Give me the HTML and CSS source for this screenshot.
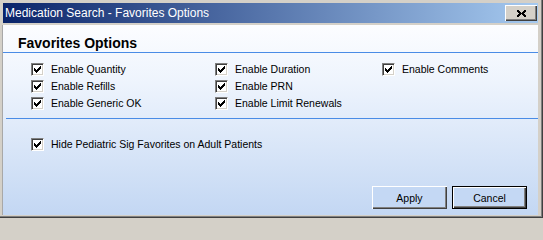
FILE: index.html
```html
<!DOCTYPE html>
<html>
<head>
<meta charset="utf-8">
<title>Medication Search - Favorites Options</title>
<link rel="stylesheet" href="styles.css">
</head>
<body>
<svg class="defs" width="0" height="0" aria-hidden="true">
  <defs>
    <symbol id="chk" viewBox="0 0 7 7">
      <rect x="6" y="0" width="1" height="1"/>
      <rect x="5" y="1" width="2" height="1"/>
      <rect x="0" y="2" width="1" height="1"/>
      <rect x="4" y="2" width="3" height="1"/>
      <rect x="0" y="3" width="2" height="1"/>
      <rect x="3" y="3" width="3" height="1"/>
      <rect x="0" y="4" width="5" height="1"/>
      <rect x="1" y="5" width="3" height="1"/>
      <rect x="2" y="6" width="1" height="1"/>
    </symbol>
  </defs>
</svg>
<div class="window">
  <div class="titlebar">
    <span class="title">Medication Search - Favorites Options</span>
    <button class="close" aria-label="Close">
      <svg width="9" height="7" viewBox="0 0 9 7">
        <rect x="0" y="0" width="2" height="1"/><rect x="7" y="0" width="2" height="1"/>
        <rect x="0" y="1" width="3" height="1"/><rect x="6" y="1" width="3" height="1"/>
        <rect x="1" y="2" width="3" height="1"/><rect x="5" y="2" width="3" height="1"/>
        <rect x="2" y="3" width="5" height="1"/>
        <rect x="1" y="4" width="3" height="1"/><rect x="5" y="4" width="3" height="1"/>
        <rect x="0" y="5" width="3" height="1"/><rect x="6" y="5" width="3" height="1"/>
        <rect x="0" y="6" width="2" height="1"/><rect x="7" y="6" width="2" height="1"/>
      </svg>
    </button>
  </div>
  <div class="panel">
    <div class="heading">Favorites Options</div>
    <div class="options">
      <label class="opt"><span class="cb"><svg><use href="#chk"/></svg></span>Enable Quantity</label>
      <label class="opt"><span class="cb"><svg><use href="#chk"/></svg></span>Enable Refills</label>
      <label class="opt"><span class="cb"><svg><use href="#chk"/></svg></span>Enable Generic OK</label>
      <label class="opt"><span class="cb"><svg><use href="#chk"/></svg></span>Enable Duration</label>
      <label class="opt"><span class="cb"><svg><use href="#chk"/></svg></span>Enable PRN</label>
      <label class="opt"><span class="cb"><svg><use href="#chk"/></svg></span>Enable Limit Renewals</label>
      <label class="opt"><span class="cb"><svg><use href="#chk"/></svg></span>Enable Comments</label>
    </div>
    <div class="sep"></div>
    <div class="extra">
      <label class="opt"><span class="cb"><svg><use href="#chk"/></svg></span>Hide Pediatric Sig Favorites on Adult Patients</label>
    </div>
    <div class="actions">
      <button class="btn">Apply</button>
      <button class="btn default">Cancel</button>
    </div>
  </div>
</div>
</body>
</html>
```

FILE: styles.css
```css
html, body {
  margin: 0;
  padding: 0;
  background: #d4d0c8;
}

.defs {
  position: absolute;
  width: 0;
  height: 0;
}

.window {
  width: 543px;
  height: 218px;
  box-sizing: border-box;
  padding: 3px 5px 3px 3px;
  background: #d4d0c8;
  box-shadow: inset -1px -1px 0 #404040, inset -2px -2px 0 #808080;
  display: flex;
  flex-direction: column;
  font-family: "Liberation Sans", Arial, sans-serif;
}

.titlebar {
  height: 20px;
  flex: none;
  display: flex;
  align-items: center;
  justify-content: space-between;
  background: linear-gradient(to right, #0a246a, #a6caf0);
  padding-left: 2px;
  padding-right: 1px;
}

.title {
  color: #ffffff;
  font-size: 12px;
  line-height: 20px;
  white-space: nowrap;
}

.close {
  width: 32px;
  height: 16px;
  padding: 0;
  margin: 0;
  border: 0;
  background: #d4d0c8;
  box-shadow: inset 1px 1px 0 #ffffff, inset -1px -1px 0 #404040, inset -2px -2px 0 #808080;
  display: flex;
  align-items: center;
  justify-content: center;
}

.close svg {
  display: block;
  width: 9px;
  height: 7px;
  fill: #000000;
  margin-left: 1px;
}

.panel {
  flex: 1;
  margin-top: 2px;
  display: flex;
  flex-direction: column;
  background: linear-gradient(to bottom, #fcfdff 0%, #eef4fd 30%, #c3d7f3 100%);
  box-shadow: -1px 0 0 #a8a8a8;
  color: #000000;
  font-size: 10.5px;
}

.heading {
  padding: 10px 15px 1px;
  font-size: 14px;
  font-weight: bold;
  line-height: 16px;
  border-bottom: 1px solid #4a8ce6;
}

.options {
  margin-top: 8px;
  padding-left: 28px;
  display: grid;
  grid-auto-flow: column;
  grid-template-rows: repeat(3, 17px);
  grid-template-columns: 184px 167px auto;
}

.opt {
  display: flex;
  align-items: center;
  height: 17px;
  line-height: 17px;
  white-space: nowrap;
}

.cb {
  width: 13px;
  height: 13px;
  box-sizing: border-box;
  margin-right: 7px;
  background: #ffffff;
  border-top: 1px solid #808080;
  border-left: 1px solid #808080;
  border-right: 1px solid #ffffff;
  border-bottom: 1px solid #ffffff;
  box-shadow: inset 1px 1px 0 #404040, inset -1px -1px 0 #d4d0c8;
  display: flex;
  align-items: flex-start;
  justify-content: flex-start;
}

.cb svg {
  width: 7px;
  height: 7px;
  margin: 2px 0 0 2px;
  fill: #000000;
  display: block;
}

.sep {
  margin: 6px 0 0 3px;
  height: 0;
  border-top: 1px solid #4a8ce6;
}

.extra {
  margin-top: 17px;
  padding-left: 28px;
}

.actions {
  margin-top: auto;
  display: flex;
  justify-content: flex-end;
  gap: 5px;
  padding: 0 11px 6px 0;
}

.btn {
  width: 75px;
  height: 23px;
  margin: 0;
  padding: 0;
  border: 0;
  background: #c4d8f4;
  font-family: "Liberation Sans", Arial, sans-serif;
  font-size: 10.5px;
  color: #000000;
  box-shadow: inset 1px 1px 0 #ffffff, inset -1px -1px 0 #404040, inset -2px -2px 0 #808080;
}

.btn.default {
  box-shadow: inset 0 0 0 1px #000000, inset 2px 2px 0 #ffffff, inset -2px -2px 0 #404040, inset -3px -3px 0 #808080;
}
```
